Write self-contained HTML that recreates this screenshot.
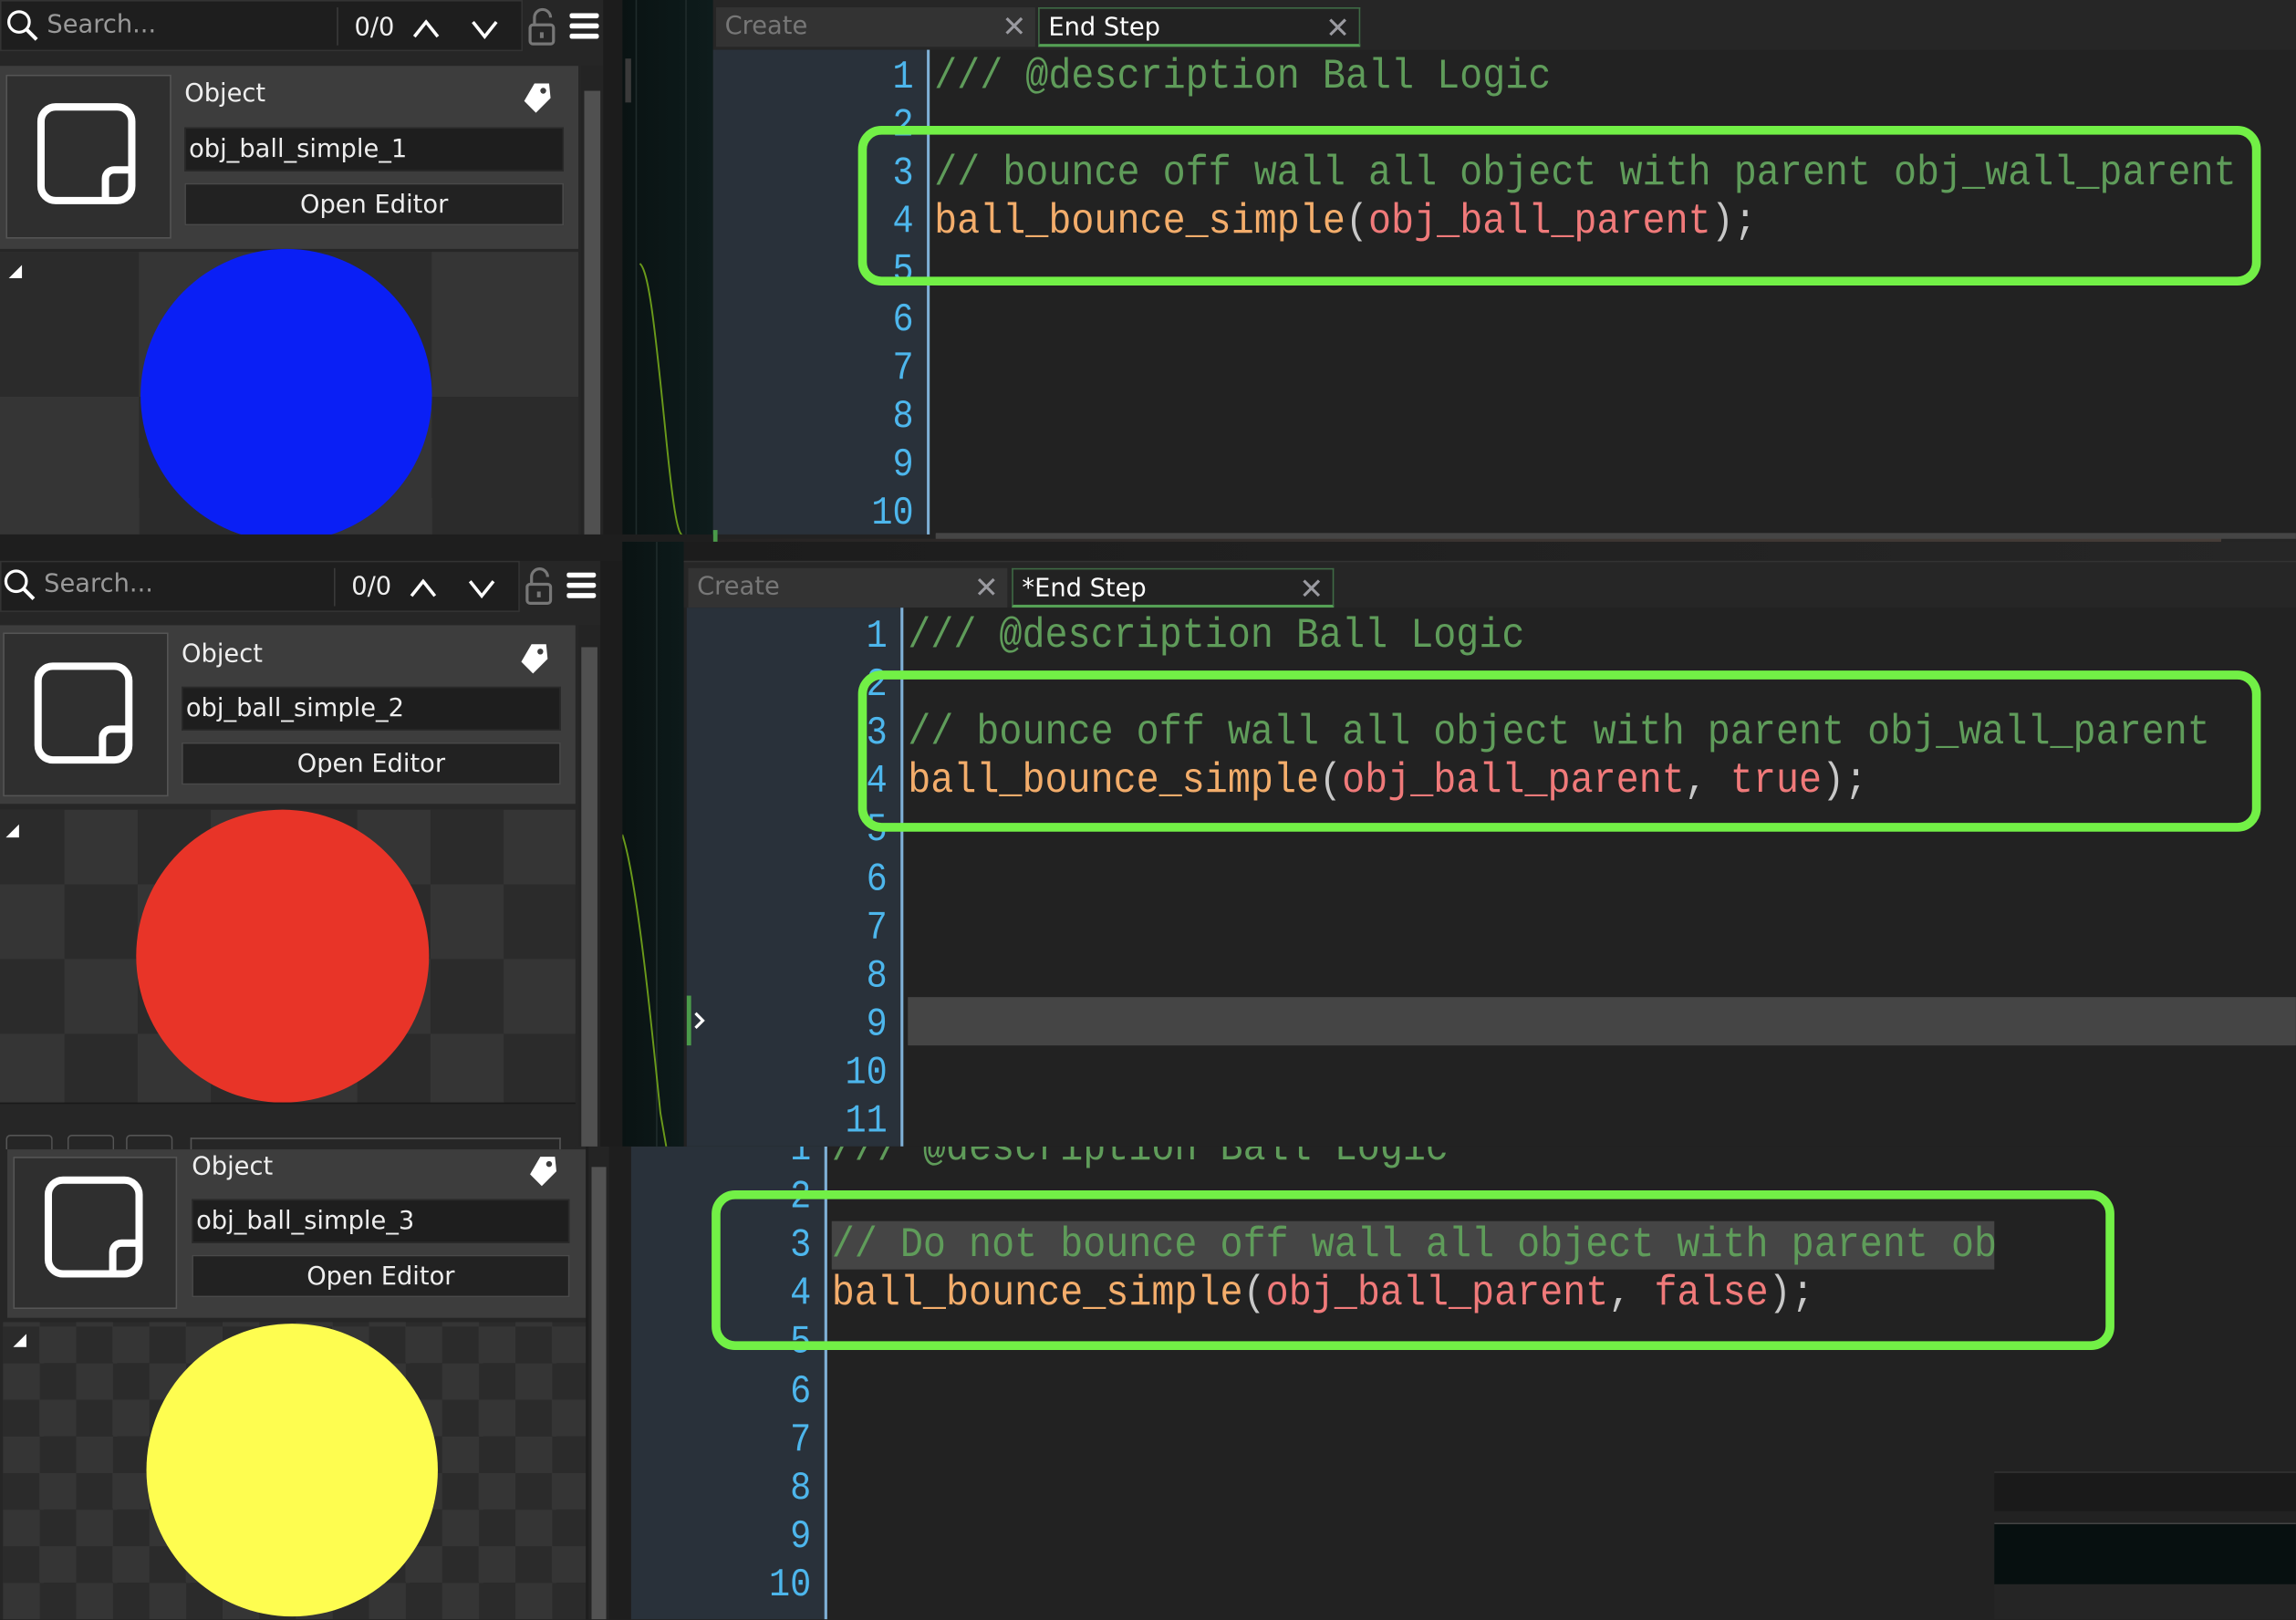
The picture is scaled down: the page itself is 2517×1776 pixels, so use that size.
<!DOCTYPE html>
<html><head><meta charset="utf-8"><style>
*{margin:0;padding:0;box-sizing:border-box}
html,body{width:2517px;height:1776px;overflow:hidden;background:#222}
#w{position:absolute;left:0;top:0;width:1568px;height:1106px;transform:scale(1.6052);transform-origin:0 0;background:#222;overflow:hidden;font-family:"Liberation Sans",sans-serif}
.a{position:absolute}
.ui{font-family:"DejaVu Sans","Liberation Sans",sans-serif;color:#eee;font-size:17px;white-space:nowrap}
.code{position:absolute;font-family:"Liberation Mono","DejaVu Sans Mono",monospace;font-size:26px;line-height:33px;height:33px;white-space:pre;transform:scaleY(1.12);transform-origin:0 50%}
.ln{position:absolute;font-family:"Liberation Mono","DejaVu Sans Mono",monospace;font-size:24px;line-height:33px;height:33px;color:#4db6ec;text-align:right;width:60px;transform:scaleY(1.12)}
.c{color:#5f9c5a}.f{color:#f3ad6b}.p{color:#f07a7a}.o{color:#c8c8c8}
.box{position:absolute;border:6px solid #72f046;border-radius:16px}
.tab{position:absolute;height:27px;font-family:"DejaVu Sans",sans-serif;font-size:17px;line-height:27px;padding-left:6px;white-space:nowrap}
.x{position:absolute;right:6px;top:0;color:#9a9aa0;font-size:20px}
</style></head><body><div id="w">

<!-- ===== separators / backgrounds ===== -->
<div class="a" style="left:0;top:0;width:430px;height:1106px;background:#262626"></div>
<div class="a" style="left:425px;top:0;width:62px;height:370px;background:linear-gradient(90deg,#0a1313,#0e1c1c)"></div>
<div class="a" style="left:434px;top:0;width:1px;height:370px;background:#1f2b2b"></div>
<div class="a" style="left:468px;top:0;width:1px;height:370px;background:#1f2b2b"></div>
<svg class="a" style="left:425px;top:0" width="62" height="370"><path d="M12 180 C18 185 22 220 30 300 S40 360 44 370" stroke="#6a9a1a" stroke-width="1.2" fill="none"/></svg>

<!-- ===== EDITOR 3 (drawn first, clipped) ===== -->
<div class="a" style="left:0;top:783px;width:1568px;height:323px;overflow:hidden">
 <div class="a" style="left:0;top:-783px;width:1568px;height:1106px">
<div class="a" style="left:400px;top:783px;width:31px;height:323px;background:#1e1e1e"></div>
<div class="a" style="left:402px;top:783px;width:14px;height:323px;background:#242424"></div>
<div class="a" style="left:404px;top:797px;width:10px;height:309px;background:#525252"></div>
<div class="a" style="left:431px;top:783px;width:132px;height:323px;background:#29313a"></div>
<div class="a" style="left:563px;top:783px;width:2px;height:323px;background:#7fb0d6"></div>
<div class="a" style="left:565px;top:783px;width:1003px;height:323px;background:#222"></div>
<div class="a" style="left:568px;top:834px;width:794px;height:33px;background:#454545"></div>
<div class="a" style="left:1362px;top:1005px;width:206px;height:27px;background:#1a1a1a;border-top:1px solid #333"></div>
<div class="a" style="left:1362px;top:1040px;width:206px;height:42px;background:#071010;border-top:1px solid #444"></div>
<div class="a" style="left:1362px;top:1082px;width:206px;height:24px;background:#252525"></div>
<div class="ln" style="left:494px;top:769px">1</div>
<div class="ln" style="left:494px;top:802px">2</div>
<div class="ln" style="left:494px;top:835px">3</div>
<div class="ln" style="left:494px;top:868px">4</div>
<div class="ln" style="left:494px;top:901px">5</div>
<div class="ln" style="left:494px;top:935px">6</div>
<div class="ln" style="left:494px;top:968px">7</div>
<div class="ln" style="left:494px;top:1001px">8</div>
<div class="ln" style="left:494px;top:1034px">9</div>
<div class="ln" style="left:494px;top:1067px">10</div>
<div class="code c" style="left:568px;top:768px">/// @description Ball Logic</div>
<div class="code c" style="left:568px;top:834px">// Do not bounce off wall all object with parent ob</div>
<div class="code" style="left:568px;top:867px"><span class="f">ball_bounce_simple</span><span class="o">(</span><span class="p">obj_ball_parent</span><span class="o">, </span><span class="p">false</span><span class="o">);</span></div>
<div class="box" style="left:486px;top:813px;width:958px;height:109px"></div>
 </div>
</div>

<!-- ===== EDITOR 1 ===== -->
<div class="a" style="left:487px;top:0;width:1081px;height:34px;background:#262626"></div>
<div class="tab" style="left:489px;top:5px;width:218px;background:#333;color:#777">Create<span class="x">✕</span></div>
<div class="tab" style="left:709px;top:5px;width:220px;background:#222;color:#fff;border:1px solid #3f6a45;border-bottom:2px solid #55a055">End Step<span class="x">✕</span></div>
<div class="a" style="left:487px;top:34px;width:146px;height:331px;background:#29313a"></div>
<div class="a" style="left:633px;top:34px;width:2px;height:331px;background:#7fb0d6"></div>
<div class="a" style="left:635px;top:34px;width:933px;height:331px;background:#222"></div>
<div class="a" style="left:639px;top:364px;width:929px;height:5px;background:#454545"></div>
<div class="a" style="left:487px;top:368px;width:1030px;height:15px;background:linear-gradient(90deg,#252323,#3b3431,#463d38)"></div>
<div class="a" style="left:1517px;top:368px;width:51px;height:15px;background:#252525"></div>
<div class="a" style="left:487px;top:362px;width:3px;height:8px;background:#4a9a4a"></div>

<div class="ln" style="left:564px;top:37px">1</div>
<div class="ln" style="left:564px;top:70px">2</div>
<div class="ln" style="left:564px;top:103px">3</div>
<div class="ln" style="left:564px;top:136px">4</div>
<div class="ln" style="left:564px;top:169px">5</div>
<div class="ln" style="left:564px;top:203px">6</div>
<div class="ln" style="left:564px;top:236px">7</div>
<div class="ln" style="left:564px;top:269px">8</div>
<div class="ln" style="left:564px;top:302px">9</div>
<div class="ln" style="left:564px;top:335px">10</div>
<div class="code c" style="left:638px;top:36px">/// @description Ball Logic</div>
<div class="code c" style="left:638px;top:102px">// bounce off wall all object with parent obj_wall_parent</div>
<div class="code" style="left:638px;top:135px"><span class="f">ball_bounce_simple</span><span class="o">(</span><span class="p">obj_ball_parent</span><span class="o">);</span></div>
<div class="box" style="left:586px;top:86px;width:958px;height:109px"></div>

<!-- ===== top panel left ===== -->
<div class="a" style="left:0;top:0;width:357px;height:35px;background:#1e1e1e;border:1px solid #333"></div>
<div class="a" style="left:230px;top:5px;width:1px;height:26px;background:#3a3a3a"></div>
<svg class="a" style="left:4px;top:6px" width="24" height="24"><circle cx="9" cy="9" r="7" stroke="#fff" stroke-width="2" fill="none"/><path d="M14 14 L21 21" stroke="#fff" stroke-width="2.5"/></svg>
<div class="ui a" style="left:32px;top:7px;color:#999">Search...</div>
<div class="ui a" style="left:242px;top:9px">0/0</div>
<svg class="a" style="left:280px;top:10px" width="80" height="18"><path d="M3 15 L11 5 L19 15" stroke="#fff" stroke-width="2.2" fill="none"/><path d="M43 5 L51 15 L59 5" stroke="#fff" stroke-width="2.2" fill="none"/></svg>
<svg class="a" style="left:360px;top:4px" width="22" height="28"><path d="M5 13 V8 A5.5 5.5 0 0 1 16 8" stroke="#777" stroke-width="2" fill="none"/><rect x="2" y="13" width="16" height="13" rx="2" stroke="#777" stroke-width="2" fill="none"/><path d="M10 18 V22" stroke="#777" stroke-width="2.5"/></svg>
<svg class="a" style="left:389px;top:9px" width="22" height="18"><rect x="0" y="0" width="20" height="3.5" rx="1.5" fill="#fff"/><rect x="0" y="7" width="20" height="3.5" rx="1.5" fill="#fff"/><rect x="0" y="14" width="20" height="3.5" rx="1.5" fill="#fff"/></svg>

<!-- card 1 -->
<div class="a" style="left:0;top:45px;width:395px;height:125px;background:#3d3d3d"></div>
<div class="a" style="left:4px;top:51px;width:113px;height:112px;background:#2f2f2f;border:1px solid #555"></div>
<svg class="a" style="left:25px;top:70px" width="70" height="72"><rect x="3" y="3" width="62" height="64" rx="10" stroke="#fff" stroke-width="5" fill="none"/><path d="M65 46 H53 A6 6 0 0 0 47 52 V67" stroke="#fff" stroke-width="5" fill="none"/></svg>
<div class="ui a" style="left:126px;top:54px">Object</div>
<svg class="a" style="left:356px;top:55px" width="22" height="24"><path d="M9 2 L19 2 L20 12 L10 22 L2 14 Z" fill="#fff"/><circle cx="15" cy="7" r="2" fill="#3d3d3d"/></svg>
<div class="a" style="left:126px;top:87px;width:259px;height:30px;background:#1e1e1e;border:1px solid #2a2a2a"></div>
<div class="ui a" style="left:129px;top:92px">obj_ball_simple_1</div>
<div class="a" style="left:126px;top:125px;width:259px;height:29px;background:#222;border:1px solid #4a4a4a"></div>
<div class="ui a" style="left:126px;top:130px;width:259px;text-align:center">Open Editor</div>
<!-- preview 1 -->
<div class="a" style="left:0;top:172px;width:395px;height:198px;background:repeating-conic-gradient(#353535 0 25%,#2b2b2b 0 50%) 0 0/200px 198px;background-position:-5px 0"></div>
<div class="a" style="left:96px;top:170px;width:199px;height:200px;border-radius:50%;background:#0a1ff5"></div>
<svg class="a" style="left:5px;top:180px" width="12" height="12"><path d="M10 1 V10 H1 Z" fill="#fff"/></svg>
<div class="a" style="left:397px;top:45px;width:15px;height:325px;background:#242424"></div>
<div class="a" style="left:399px;top:62px;width:11px;height:308px;background:#505050"></div>
<div class="a" style="left:412px;top:0;width:13px;height:370px;background:#1c1c1c"></div>
<div class="a" style="left:427px;top:40px;width:4px;height:30px;background:#3a3a3a"></div>

<div class="a" style="left:0;top:365px;width:487px;height:18px;background:#1e1e1e"></div>

<!-- ===== EDITOR 2 ===== -->
<div class="a" style="left:425px;top:370px;width:42px;height:413px;background:linear-gradient(90deg,#0a1313,#0d1a1a)"></div>
<div class="a" style="left:448px;top:370px;width:1px;height:413px;background:#1f2b2b"></div>
<svg class="a" style="left:425px;top:370px" width="42" height="413"><path d="M0 200 C10 230 20 330 26 390 L30 413" stroke="#6a9a1a" stroke-width="1.2" fill="none"/></svg>
<div class="a" style="left:467px;top:370px;width:1101px;height:18px;background:linear-gradient(90deg,#1c1c1c,#262626)"></div>
<div class="a" style="left:467px;top:383px;width:1101px;height:32px;background:#262626;border-top:1px solid #333"></div>
<div class="tab" style="left:470px;top:388px;width:218px;background:#333;color:#777">Create<span class="x">✕</span></div>
<div class="tab" style="left:691px;top:388px;width:220px;background:#222;color:#fff;border:1px solid #3f6a45;border-bottom:2px solid #55a055">*End Step<span class="x">✕</span></div>
<div class="a" style="left:0;top:415px;width:1568px;height:368px;overflow:hidden">
 <div class="a" style="left:0;top:-415px;width:1568px;height:783px">
<div class="a" style="left:469px;top:415px;width:146px;height:368px;background:#29313a"></div>
<div class="a" style="left:615px;top:415px;width:2px;height:368px;background:#7fb0d6"></div>
<div class="a" style="left:617px;top:415px;width:951px;height:368px;background:#222"></div>
<div class="a" style="left:620px;top:681px;width:948px;height:33px;background:#454545"></div>
<div class="a" style="left:469px;top:680px;width:3px;height:34px;background:#4a9a4a"></div>
<svg class="a" style="left:473px;top:690px" width="10" height="14"><path d="M2 2 L7 7 L2 12" stroke="#fff" stroke-width="2" fill="none"/></svg>
<div class="ln" style="left:546px;top:419px">1</div>
<div class="ln" style="left:546px;top:452px">2</div>
<div class="ln" style="left:546px;top:485px">3</div>
<div class="ln" style="left:546px;top:518px">4</div>
<div class="ln" style="left:546px;top:551px">5</div>
<div class="ln" style="left:546px;top:585px">6</div>
<div class="ln" style="left:546px;top:618px">7</div>
<div class="ln" style="left:546px;top:651px">8</div>
<div class="ln" style="left:546px;top:684px">9</div>
<div class="ln" style="left:546px;top:717px">10</div>
<div class="ln" style="left:546px;top:750px">11</div>
<div class="code c" style="left:620px;top:418px">/// @description Ball Logic</div>
<div class="code c" style="left:620px;top:484px">// bounce off wall all object with parent obj_wall_parent</div>
<div class="code" style="left:620px;top:517px"><span class="f">ball_bounce_simple</span><span class="o">(</span><span class="p">obj_ball_parent</span><span class="o">, </span><span class="p">true</span><span class="o">);</span></div>
<div class="box" style="left:586px;top:458px;width:958px;height:110px"></div>
 </div>
</div>

<!-- panel 2 left -->
<div class="a" style="left:0;top:383px;width:355px;height:35px;background:#1e1e1e;border:1px solid #333"></div>
<div class="a" style="left:228px;top:388px;width:1px;height:26px;background:#3a3a3a"></div>
<svg class="a" style="left:2px;top:388px" width="24" height="24"><circle cx="9" cy="9" r="7" stroke="#fff" stroke-width="2" fill="none"/><path d="M14 14 L21 21" stroke="#fff" stroke-width="2.5"/></svg>
<div class="ui a" style="left:30px;top:389px;color:#999">Search...</div>
<div class="ui a" style="left:240px;top:391px">0/0</div>
<svg class="a" style="left:278px;top:392px" width="80" height="18"><path d="M3 15 L11 5 L19 15" stroke="#fff" stroke-width="2.2" fill="none"/><path d="M43 5 L51 15 L59 5" stroke="#fff" stroke-width="2.2" fill="none"/></svg>
<svg class="a" style="left:358px;top:386px" width="22" height="28"><path d="M5 13 V8 A5.5 5.5 0 0 1 16 8" stroke="#777" stroke-width="2" fill="none"/><rect x="2" y="13" width="16" height="13" rx="2" stroke="#777" stroke-width="2" fill="none"/><path d="M10 18 V22" stroke="#777" stroke-width="2.5"/></svg>
<svg class="a" style="left:387px;top:391px" width="22" height="18"><rect x="0" y="0" width="20" height="3.5" rx="1.5" fill="#fff"/><rect x="0" y="7" width="20" height="3.5" rx="1.5" fill="#fff"/><rect x="0" y="14" width="20" height="3.5" rx="1.5" fill="#fff"/></svg>

<div class="a" style="left:0;top:427px;width:393px;height:122px;background:#3d3d3d"></div>
<div class="a" style="left:2px;top:432px;width:113px;height:112px;background:#2f2f2f;border:1px solid #555"></div>
<svg class="a" style="left:23px;top:452px" width="70" height="72"><rect x="3" y="3" width="62" height="64" rx="10" stroke="#fff" stroke-width="5" fill="none"/><path d="M65 46 H53 A6 6 0 0 0 47 52 V67" stroke="#fff" stroke-width="5" fill="none"/></svg>
<div class="ui a" style="left:124px;top:437px">Object</div>
<svg class="a" style="left:354px;top:438px" width="22" height="24"><path d="M9 2 L19 2 L20 12 L10 22 L2 14 Z" fill="#fff"/><circle cx="15" cy="7" r="2" fill="#3d3d3d"/></svg>
<div class="a" style="left:124px;top:469px;width:259px;height:30px;background:#1e1e1e;border:1px solid #2a2a2a"></div>
<div class="ui a" style="left:127px;top:474px">obj_ball_simple_2</div>
<div class="a" style="left:124px;top:507px;width:259px;height:29px;background:#222;border:1px solid #4a4a4a"></div>
<div class="ui a" style="left:124px;top:512px;width:259px;text-align:center">Open Editor</div>
<div class="a" style="left:0;top:553px;width:393px;height:200px;background:repeating-conic-gradient(#353535 0 25%,#2b2b2b 0 50%) 0 0/100px 102px;background-position:-6px 0"></div>
<div class="a" style="left:93px;top:553px;width:200px;height:200px;border-radius:50%;background:#e83428"></div>
<svg class="a" style="left:3px;top:562px" width="12" height="12"><path d="M10 1 V10 H1 Z" fill="#fff"/></svg>
<div class="a" style="left:0;top:753px;width:393px;height:30px;background:#262626;border-top:1px solid #1a1a1a"></div>
<div class="a" style="left:4px;top:775px;width:32px;height:10px;border:1px solid #555;border-bottom:none;border-radius:3px 3px 0 0"></div>
<div class="a" style="left:46px;top:775px;width:32px;height:10px;border:1px solid #555;border-bottom:none;border-radius:3px 3px 0 0"></div>
<div class="a" style="left:86px;top:775px;width:32px;height:10px;border:1px solid #555;border-bottom:none;border-radius:3px 3px 0 0"></div>
<div class="a" style="left:130px;top:777px;width:253px;height:8px;border:1px solid #555;border-bottom:none"></div>
<div class="a" style="left:395px;top:427px;width:15px;height:356px;background:#242424"></div>
<div class="a" style="left:397px;top:442px;width:11px;height:341px;background:#505050"></div>
<div class="a" style="left:410px;top:383px;width:15px;height:400px;background:#1c1c1c"></div>

<!-- panel 3 left -->
<div class="a" style="left:5px;top:785px;width:395px;height:115px;background:#3d3d3d"></div>
<div class="a" style="left:9px;top:790px;width:112px;height:104px;background:#2f2f2f;border:1px solid #555"></div>
<svg class="a" style="left:30px;top:803px" width="70" height="72"><rect x="3" y="3" width="62" height="64" rx="10" stroke="#fff" stroke-width="5" fill="none"/><path d="M65 46 H53 A6 6 0 0 0 47 52 V67" stroke="#fff" stroke-width="5" fill="none"/></svg>
<div class="ui a" style="left:131px;top:787px">Object</div>
<svg class="a" style="left:360px;top:788px" width="22" height="24"><path d="M9 2 L19 2 L20 12 L10 22 L2 14 Z" fill="#fff"/><circle cx="15" cy="7" r="2" fill="#3d3d3d"/></svg>
<div class="a" style="left:131px;top:819px;width:258px;height:30px;background:#1e1e1e;border:1px solid #2a2a2a"></div>
<div class="ui a" style="left:134px;top:824px">obj_ball_simple_3</div>
<div class="a" style="left:131px;top:857px;width:258px;height:29px;background:#222;border:1px solid #4a4a4a"></div>
<div class="ui a" style="left:131px;top:862px;width:258px;text-align:center">Open Editor</div>
<div class="a" style="left:2px;top:903px;width:398px;height:203px;background:repeating-conic-gradient(#353535 0 25%,#2b2b2b 0 50%) 0 0/50px 50px;background-position:0 3px"></div>
<div class="a" style="left:100px;top:904px;width:199px;height:200px;border-radius:50%;background:#fefd50"></div>
<svg class="a" style="left:8px;top:910px" width="12" height="12"><path d="M10 1 V10 H1 Z" fill="#fff"/></svg>

</div></body></html>
